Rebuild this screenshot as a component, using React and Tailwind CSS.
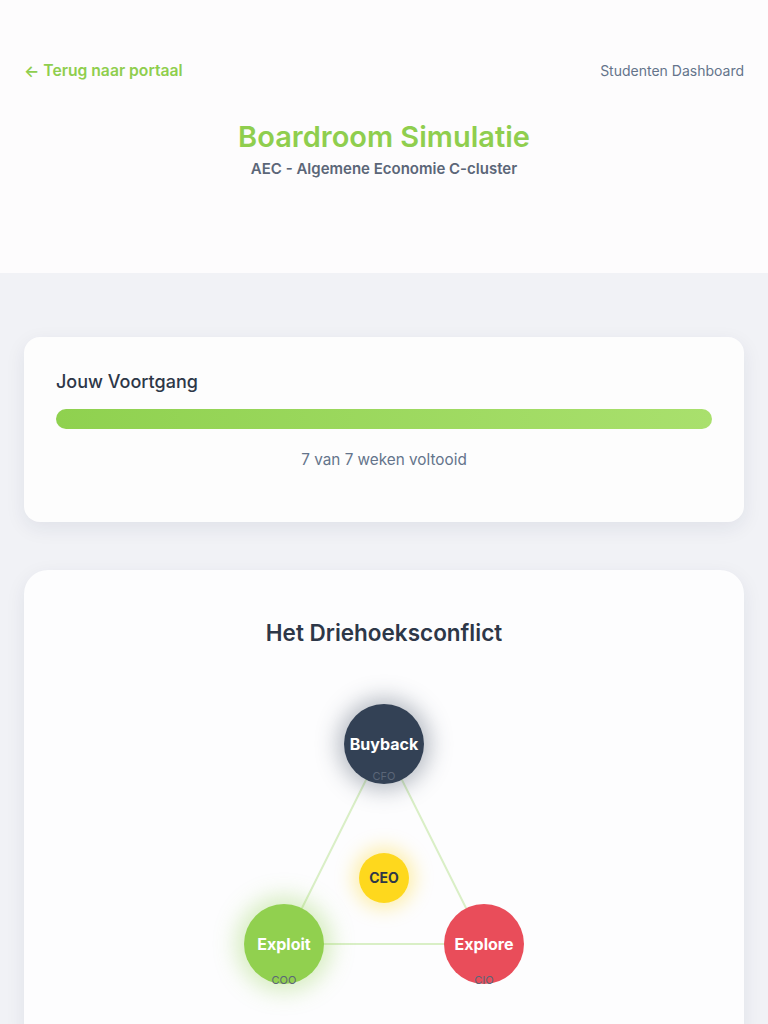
import React from "react";

export default function App() {
  return (
    <div className="min-h-[1024px] bg-[#f1f2f6] font-['Inter',_sans-serif]">
      <header className="h-[273px] bg-[#fdfcfd] px-6 pt-[59px]">
        <div className="flex items-center justify-between">
          <a className="flex items-center gap-1 text-[15.7px] font-semibold text-[#8fce4e]">
            <span className="text-[16px] leading-none">←</span>
            <span>Terug naar portaal</span>
          </a>
          <span className="text-[14px] text-[#64748b]">Studenten Dashboard</span>
        </div>
        <div className="mt-[36px] text-center">
          <h1 className="text-[29px] font-semibold leading-[36px] text-[#8fce4e]">Boardroom Simulatie</h1>
          <p className="mt-[3px] text-[15px] font-semibold text-[#5b6678]">AEC - Algemene Economie C-cluster</p>
        </div>
      </header>

      <main className="px-6 pt-16">
        <section className="rounded-2xl bg-[#fdfdfd] px-8 pt-[33px] pb-[50px] shadow-[0_6px_20px_rgba(30,40,80,0.08)]">
          <h2 className="text-[18px] font-medium leading-[24px] text-[#2d3748]">Jouw Voortgang</h2>
          <div className="mt-[15px] h-5 rounded-full bg-gradient-to-r from-[#8fd14f] to-[#a9e06d]" />
          <p className="mt-[20px] text-center text-[15.3px] text-[#64748b]">7 van 7 weken voltooid</p>
        </section>

        <section className="mt-12 rounded-[24px] bg-[#fdfdfe] pt-[49px] pb-10 shadow-[0_6px_20px_rgba(30,40,80,0.08)]">
          <h2 className="text-center text-[22.5px] font-semibold leading-[28px] text-[#2d3748]">Het Driehoeksconflict</h2>
          <div className="relative mx-auto mt-[43px] h-[320px] w-[300px]">
            <svg className="absolute inset-0" width="300" height="320">
              <line x1="150" y1="54" x2="50" y2="254" stroke="#d9efc6" strokeWidth="2" />
              <line x1="150" y1="54" x2="250" y2="254" stroke="#d9efc6" strokeWidth="2" />
              <line x1="50" y1="254" x2="250" y2="254" stroke="#d9efc6" strokeWidth="2" />
            </svg>
            <div className="absolute left-[110px] top-[14px] flex h-20 w-20 flex-col items-center justify-center rounded-full bg-[#334155] shadow-[0_0_22px_6px_rgba(51,65,85,0.35)]">
              <span className="text-[16px] font-bold text-white">Buyback</span>
              <span className="absolute bottom-[-1px] text-[11px] text-[#5b6678]">CFO</span>
            </div>
            <div className="absolute left-[125px] top-[163px] flex h-[50px] w-[50px] items-center justify-center rounded-full bg-[#fed81d] shadow-[0_0_18px_6px_rgba(254,216,29,0.35)]">
              <span className="text-[14px] font-bold text-[#2d3748]">CEO</span>
            </div>
            <div className="absolute left-[10px] top-[214px] flex h-20 w-20 items-center justify-center rounded-full bg-[#91d04f] shadow-[0_0_22px_8px_rgba(145,208,79,0.35)]">
              <span className="text-[16px] font-bold text-white">Exploit</span>
              <span className="absolute bottom-[-5px] text-[11px] text-[#5b6678]">COO</span>
            </div>
            <div className="absolute left-[210px] top-[214px] flex h-20 w-20 items-center justify-center rounded-full bg-[#e94d5a]">
              <span className="text-[16px] font-bold text-white">Explore</span>
              <span className="absolute bottom-[-5px] text-[11px] text-[#5b6678]">CIO</span>
            </div>
          </div>
        </section>
      </main>
    </div>
  );
}
